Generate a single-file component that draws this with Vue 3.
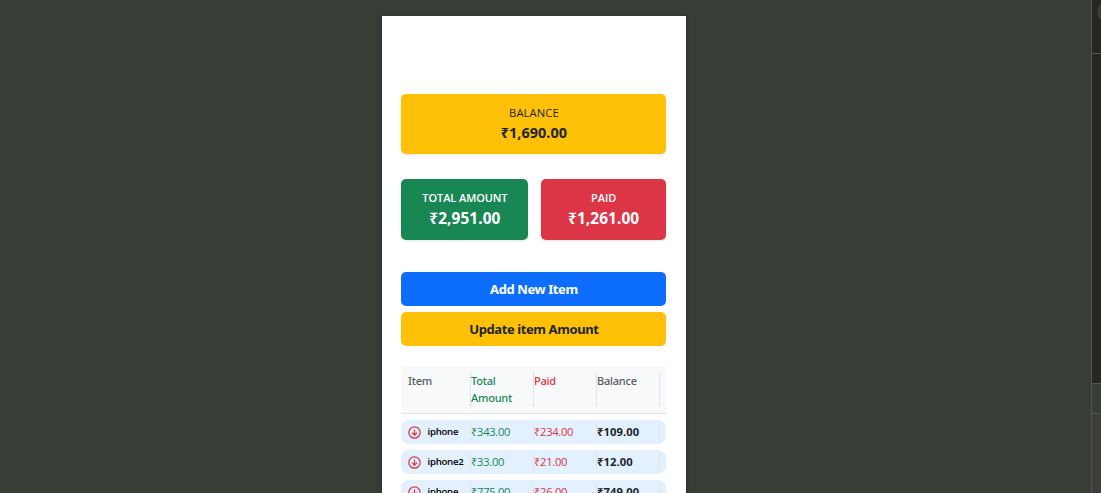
<script setup>
const columns = [
  { label: 'Item', tone: 'muted' },
  { label: 'Total Amount', tone: 'green' },
  { label: 'Paid', tone: 'red' },
  { label: 'Balance', tone: 'muted' },
]
const rows = [
  { name: 'iphone', total: '₹343.00', paid: '₹234.00', balance: '₹109.00' },
  { name: 'iphone2', total: '₹33.00', paid: '₹21.00', balance: '₹12.00' },
  { name: 'iphone', total: '₹775.00', paid: '₹26.00', balance: '₹749.00' },
]
</script>

<template>
  <div class="window">
    <div class="stage">
      <main class="phone">
        <section class="summary balance">
          <div class="label">BALANCE</div>
          <div class="value">₹1,690.00</div>
        </section>
        <div class="pair">
          <section class="summary total">
            <div class="label">TOTAL AMOUNT</div>
            <div class="value">₹2,951.00</div>
          </section>
          <section class="summary paid">
            <div class="label">PAID</div>
            <div class="value">₹1,261.00</div>
          </section>
        </div>
        <div class="actions">
          <button class="add" type="button">Add New Item</button>
          <button class="update" type="button">Update item Amount</button>
        </div>
        <div class="thead">
          <div v-for="c in columns" :key="c.label" class="cell" :class="c.tone">{{ c.label }}</div>
        </div>
        <div v-for="(r, i) in rows" :key="i" class="row">
          <div class="cell item">
            <svg width="13" height="13" viewBox="0 0 16 16" fill="none" stroke="#dc3545" stroke-width="1.5">
              <circle cx="8" cy="8" r="7" />
              <path d="M8 4.2V11.2M4.8 8.2L8 11.4L11.2 8.2" />
            </svg>
            <span>{{ r.name }}</span>
          </div>
          <div class="cell green">{{ r.total }}</div>
          <div class="cell red">{{ r.paid }}</div>
          <div class="cell strong">{{ r.balance }}</div>
        </div>
      </main>
    </div>
    <aside class="side">
      <div class="side-top"><i class="knob"></i></div>
      <div class="side-body"></div>
      <div class="side-bar"></div>
      <div class="side-foot"></div>
    </aside>
  </div>
</template>

<style>
body {
  overflow: hidden;
}
</style>

<style scoped>
* {
  box-sizing: border-box;
}
.window {
  width: 1101px;
  height: 493px;
  display: flex;
  overflow: hidden;
  background: #383d35;
  font-family: "Open Sans", "Noto Sans", sans-serif;
  color: #212529;
}
.stage {
  width: 1091px;
  height: 493px;
  padding-top: 16px;
  padding-left: 382px;
  overflow: hidden;
}
.phone {
  width: 304px;
  height: 520px;
  padding: 78px 19.6px 0 19.4px;
  background: #fff;
  box-shadow: 0 0 5px rgba(0, 0, 0, 0.2);
}
.summary {
  border-radius: 5px;
  text-align: center;
  box-shadow: 0 1px 3px rgba(0, 0, 0, 0.1);
}
.label {
  font-size: 11.2px;
  line-height: 17px;
}
.value {
  font-family: "Noto Sans", sans-serif;
  font-size: 14.4px;
  font-weight: 700;
  line-height: 24px;
  letter-spacing: 0.05px;
}
.balance {
  height: 59.5px;
  padding-top: 9.5px;
  background: #ffc107;
}
.balance .label {
  letter-spacing: 0.1px;
}
.pair {
  display: grid;
  grid-template-columns: 127px 125.5px;
  gap: 12.5px;
  margin-top: 25.5px;
  color: #fff;
}
.pair .summary {
  height: 61px;
  padding-top: 10px;
}
.pair .label {
  font-size: 11px;
  font-weight: 600;
  letter-spacing: -0.1px;
}
.pair .value {
  font-size: 15.4px;
  line-height: 26px;
  letter-spacing: 0.1px;
}
.total {
  background: #198754;
}
.paid {
  background: #dc3545;
}
.actions {
  display: flex;
  flex-direction: column;
  gap: 6px;
  margin-top: 32px;
}
button {
  height: 34px;
  padding: 0;
  border: 0;
  border-radius: 5px;
  font-family: "Noto Sans", sans-serif;
  font-size: 13px;
  font-weight: 700;
  line-height: 34px;
  letter-spacing: -0.4px;
}
.add {
  background: #0d6efd;
  color: #fff;
}
.update {
  background: #ffc107;
  color: #212529;
}
.thead,
.row {
  display: grid;
  grid-template-columns: 63px 63px 63px 63px;
  padding-left: 6.6px;
}
.thead {
  height: 48px;
  margin-top: 20px;
  padding-top: 6px;
  background: #f8f9fa;
  border-bottom: 1px solid #dee2e6;
}
.cell {
  border-right: 1px solid #e0e4e7;
  font-size: 11.2px;
  letter-spacing: -0.3px;
  white-space: nowrap;
}
.thead .cell {
  height: 35px;
  font-family: "Noto Sans", "Open Sans", sans-serif;
  font-size: 11px;
  font-weight: 500;
  line-height: 17px;
  letter-spacing: -0.22px;
  white-space: normal;
}
.row {
  height: 24px;
  margin-top: 6px;
  padding-top: 3px;
  border-radius: 8px;
  background: #e2f1fd;
}
.row .cell {
  height: 18px;
  line-height: 18px;
}
.row .item {
  display: flex;
  align-items: center;
  gap: 6.5px;
  color: #000;
  font-size: 9.6px;
  font-weight: 600;
  letter-spacing: -0.25px;
}
.item svg {
  flex: none;
}
.muted {
  color: #555b61;
}
.green {
  color: #198754;
}
.red {
  color: #dc3545;
}
.row .strong {
  font-weight: 700;
  letter-spacing: 0.08px;
}
.side {
  width: 10px;
  display: flex;
  flex-direction: column;
  border-left: 1px solid #51554d;
  overflow: hidden;
}
.side-top {
  height: 54px;
  background: #252624;
  border-bottom: 1px solid #51554d;
}
.knob {
  display: block;
  width: 20px;
  height: 20px;
  margin: 2px 0 0 5px;
  border-radius: 50%;
  background: #393d35;
}
.side-body {
  height: 329px;
  background: #252624;
}
.side-bar {
  height: 31px;
  background: #383d35;
  border-top: 1px solid #51554d;
  border-bottom: 1px solid #51554d;
}
.side-foot {
  flex: 1;
  background: #3f3d3c;
}
</style>
